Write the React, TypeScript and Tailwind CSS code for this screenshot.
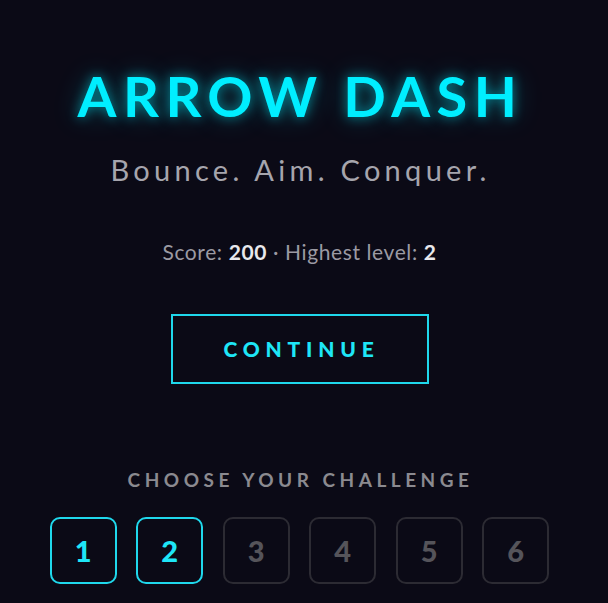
import React from "react"

const levels = [1, 2, 3, 4, 5, 6]
const unlocked = 2

export default function App() {
  return (
    <div
      className="min-h-screen w-full bg-[#0b0a16] flex flex-col items-center text-center pr-[9px]"
      style={{ fontFamily: "Lato, 'Open Sans', sans-serif" }}
    >
      {/* Title */}
      <h1 className="mt-[68px] pl-[2px] text-[56px] leading-none font-bold tracking-[6.5px] text-[#00eeff] [text-shadow:0_0_12px_rgba(0,238,255,0.55),0_0_28px_rgba(0,238,255,0.3)]">
        ARROW DASH
      </h1>
      <p className="mt-[31px] pl-[2px] text-[29px] leading-none tracking-[4.3px] text-[#a6a5ad]">
        Bounce. Aim. Conquer.
      </p>

      {/* Stats */}
      <p className="mt-[57px] text-[21px] leading-none tracking-[0.6px] text-[#9b9aa3]">
        Score: <span className="font-bold text-[#e8e8ec]">200</span> · Highest level:{" "}
        <span className="font-bold text-[#e8e8ec]">2</span>
      </p>

      <button className="mt-[52px] w-[258px] h-[70px] pl-[4px] border-2 border-[#1fd8ec] text-[#1ee6f7] text-[21px] font-black tracking-[5.8px]">
        CONTINUE
      </button>

      {/* Level picker */}
      <h2 className="mt-[86px] pl-[2px] text-[19px] leading-none font-bold tracking-[4.5px] text-[#8b8a90]">
        CHOOSE YOUR CHALLENGE
      </h2>
      <div className="mt-[28px] flex gap-[19.5px]">
        {levels.map((n) => {
          const open = n <= unlocked
          return (
            <button
              key={n}
              className={
                open
                  ? "w-[67px] h-[67px] rounded-[10px] border-2 border-[#1fd8ec] text-[#1ee6f7] text-[29px] font-black"
                  : "w-[67px] h-[67px] rounded-[10px] border-2 border-[#2c2b33] text-[#55545a] text-[29px] font-black"
              }
            >
              {n}
            </button>
          )
        })}
      </div>
    </div>
  )
}
